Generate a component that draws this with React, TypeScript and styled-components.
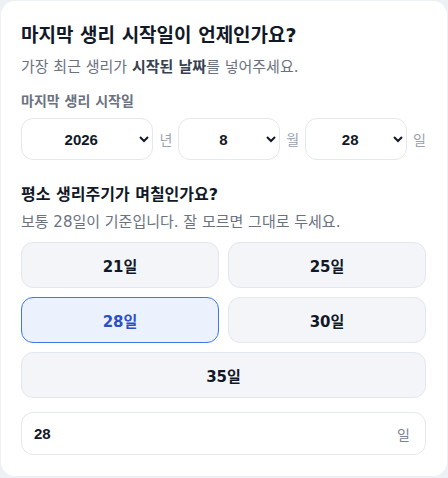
import React, { useState } from "react";
import styled, { createGlobalStyle } from "styled-components";

const GlobalStyle = createGlobalStyle`
  html, body {
    margin: 0;
    padding: 0;
    background: #edf0f5;
  }
  body {
    font-family: "DejaVu Sans", "Noto Sans CJK KR", sans-serif;
    color: #111827;
  }
  * {
    box-sizing: border-box;
  }
`;

const Card = styled.section`
  margin: 1px;
  width: 446px;
  background: #ffffff;
  border-radius: 14px;
  padding: 21px 21px 21px 20px;
`;

const Title = styled.h1`
  margin: 0;
  font-size: 19px;
  line-height: 26px;
  font-weight: 700;
  color: #111827;
`;

const SubTitle = styled.h2`
  margin: 23px 0 0;
  font-size: 16px;
  line-height: 24px;
  font-weight: 700;
  color: #111827;
`;

const Help = styled.p<{ $gap?: number }>`
  margin: ${(p) => p.$gap ?? 8}px 0 0;
  font-size: 15px;
  line-height: 22px;
  color: #6b7280;

  b {
    color: #374151;
    font-weight: 700;
  }
`;

const FieldLabel = styled.div`
  margin-top: 13px;
  font-size: 14px;
  line-height: 20px;
  font-weight: 700;
  color: #6b7280;
`;

const DateRow = styled.div`
  margin-top: 7px;
  display: grid;
  grid-template-columns: 1.3fr auto 1fr auto 1fr auto;
  align-items: center;
  gap: 6px;
`;

const Select = styled.select`
  height: 42px;
  width: 100%;
  border: 1px solid #e3e7ee;
  border-radius: 12px;
  background: #ffffff;
  font-family: "Liberation Sans", "Noto Sans CJK KR", sans-serif;
  font-size: 15px;
  font-weight: 700;
  color: #111827;
  text-align: center;
  text-align-last: center;
  padding: 0 8px;
`;

const Unit = styled.span`
  font-size: 14px;
  color: #9aa3b2;
`;

const ChoiceGrid = styled.div`
  margin-top: 9px;
  display: grid;
  grid-template-columns: 1fr 1fr;
  gap: 9px;
`;

const Choice = styled.button<{ $active?: boolean; $wide?: boolean }>`
  grid-column: ${(p) => (p.$wide ? "1 / -1" : "auto")};
  height: 46px;
  border-radius: 12px;
  border: 1px solid ${(p) => (p.$active ? "#3f78e8" : "#e3e7ee")};
  background: ${(p) => (p.$active ? "#ebf2fe" : "#f4f5f9")};
  color: ${(p) => (p.$active ? "#2a50c4" : "#111827")};
  font-family: "DejaVu Sans", "Noto Sans CJK KR", sans-serif;
  font-size: 15px;
  font-weight: 700;
  cursor: pointer;
`;

const InputBox = styled.label`
  margin-top: 14px;
  height: 43px;
  display: flex;
  align-items: center;
  border: 1px solid #e3e7ee;
  border-radius: 12px;
  padding: 0 15px 0 12px;
  background: #ffffff;
`;

const NumberInput = styled.input`
  flex: 1;
  min-width: 0;
  border: none;
  outline: none;
  background: transparent;
  font-family: "Liberation Sans", "Noto Sans CJK KR", sans-serif;
  font-size: 15px;
  font-weight: 700;
  color: #111827;
  padding: 0;
`;

const Suffix = styled.span`
  font-size: 14px;
  color: #7b8494;
`;

const years = [2024, 2025, 2026];
const months = Array.from({ length: 12 }, (_, i) => i + 1);
const days = Array.from({ length: 31 }, (_, i) => i + 1);
const cycles = [21, 25, 28, 30, 35];

export default function App() {
  const [year, setYear] = useState(2026);
  const [month, setMonth] = useState(8);
  const [day, setDay] = useState(28);
  const [cycle, setCycle] = useState(28);

  return (
    <>
      <GlobalStyle />
      <Card>
        <Title>마지막 생리 시작일이 언제인가요?</Title>
        <Help>
          가장 최근 생리가 <b>시작된 날짜</b>를 넣어주세요.
        </Help>
        <FieldLabel>마지막 생리 시작일</FieldLabel>
        <DateRow>
          <Select value={year} onChange={(e) => setYear(+e.target.value)}>
            {years.map((y) => (
              <option key={y} value={y}>
                {y}
              </option>
            ))}
          </Select>
          <Unit>년</Unit>
          <Select value={month} onChange={(e) => setMonth(+e.target.value)}>
            {months.map((m) => (
              <option key={m} value={m}>
                {m}
              </option>
            ))}
          </Select>
          <Unit>월</Unit>
          <Select value={day} onChange={(e) => setDay(+e.target.value)}>
            {days.map((d) => (
              <option key={d} value={d}>
                {d}
              </option>
            ))}
          </Select>
          <Unit>일</Unit>
        </DateRow>

        <SubTitle>평소 생리주기가 며칠인가요?</SubTitle>
        <Help $gap={4}>보통 28일이 기준입니다. 잘 모르면 그대로 두세요.</Help>
        <ChoiceGrid>
          {cycles.map((c, i) => (
            <Choice
              key={c}
              $active={cycle === c}
              $wide={i === cycles.length - 1}
              onClick={() => setCycle(c)}
            >
              {c}일
            </Choice>
          ))}
        </ChoiceGrid>
        <InputBox>
          <NumberInput
            type="text"
            value={cycle}
            onChange={(e) => setCycle(+e.target.value || 0)}
          />
          <Suffix>일</Suffix>
        </InputBox>
      </Card>
    </>
  );
}
